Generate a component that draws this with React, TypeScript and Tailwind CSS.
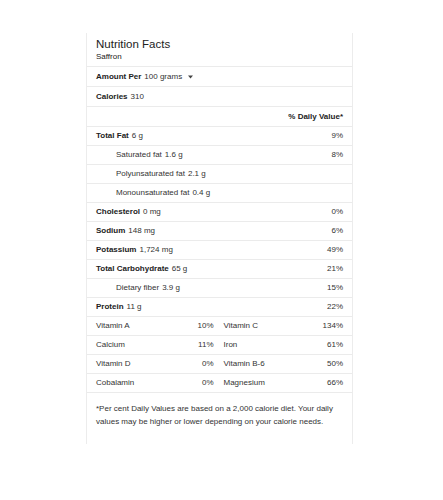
import React from "react";

type Row = {
  label: string;
  value?: string;
  pct?: string;
  bold?: boolean;
  indent?: boolean;
};

const rows: Row[] = [
  { label: "Total Fat", value: "6 g", pct: "9%", bold: true },
  { label: "Saturated fat", value: "1.6 g", pct: "8%", indent: true },
  { label: "Polyunsaturated fat", value: "2.1 g", indent: true },
  { label: "Monounsaturated fat", value: "0.4 g", indent: true },
  { label: "Cholesterol", value: "0 mg", pct: "0%", bold: true },
  { label: "Sodium", value: "148 mg", pct: "6%", bold: true },
  { label: "Potassium", value: "1,724 mg", pct: "49%", bold: true },
  { label: "Total Carbohydrate", value: "65 g", pct: "21%", bold: true },
  { label: "Dietary fiber", value: "3.9 g", pct: "15%", indent: true },
  { label: "Protein", value: "11 g", pct: "22%", bold: true },
];

const vitamins: [string, string, string, string][] = [
  ["Vitamin A", "10%", "Vitamin C", "134%"],
  ["Calcium", "11%", "Iron", "61%"],
  ["Vitamin D", "0%", "Vitamin B-6", "50%"],
  ["Cobalamin", "0%", "Magnesium", "66%"],
];

export default function App() {
  return (
    <div className="min-h-[500px] bg-white pt-[33px] pl-[86px] font-['Liberation_Sans',Arial,sans-serif] text-[#222]">
      <div className="w-[267px] border-x border-[#ececec] bg-white">
        {/* header */}
        <div className="h-[34px] border-b border-[#ebebeb] px-[9px] pt-[4px]">
          <h1 className="text-[11.5px] leading-[14px] text-[#222]">Nutrition Facts</h1>
          <p className="text-[8px] leading-[12px] text-[#222]">Saffron</p>
        </div>

        <div className="flex h-[20px] items-center border-b border-[#ebebeb] px-[9px] text-[8px]">
          <span className="font-bold">Amount Per</span>
          <span className="ml-[3px] text-[#333]">100 grams</span>
          <svg width="5" height="4" viewBox="0 0 5 4" className="ml-[6px]">
            <path d="M0 0.5 L5 0.5 L2.5 3.5 Z" fill="#444" />
          </svg>
        </div>

        <div className="flex h-[20px] items-center border-b border-[#ebebeb] px-[9px] text-[8px]">
          <span className="font-bold">Calories</span>
          <span className="ml-[3px] text-[#333]">310</span>
        </div>

        <div className="flex h-[20px] items-center justify-end border-b border-[#ebebeb] px-[9px] text-[8px] font-bold">
          % Daily Value*
        </div>

        {rows.map((r) => (
          <div
            key={r.label}
            className={`flex h-[19px] items-center justify-between border-b border-[#ebebeb] pr-[9px] text-[8px] ${
              r.indent ? "pl-[29px]" : "pl-[9px]"
            }`}
          >
            <span>
              <span className={r.bold ? "font-bold" : "text-[#333]"}>{r.label}</span>
              <span className="ml-[3px] text-[#333]">{r.value}</span>
            </span>
            <span className="text-[#333]">{r.pct}</span>
          </div>
        ))}

        {vitamins.map(([a, ap, b, bp]) => (
          <div
            key={a}
            className="grid h-[19px] grid-cols-2 items-center border-b border-[#ebebeb] px-[9px] text-[8px] text-[#333]"
          >
            <div className="flex justify-between pr-[6px]">
              <span>{a}</span>
              <span>{ap}</span>
            </div>
            <div className="flex justify-between pl-[4px]">
              <span>{b}</span>
              <span>{bp}</span>
            </div>
          </div>
        ))}

        <p className="px-[9px] pt-[9px] pb-[16px] text-[8px] leading-[13px] text-[#333]">
          *Per cent Daily Values are based on a 2,000 calorie diet. Your daily values may be higher or lower depending on your calorie needs.
        </p>
      </div>
    </div>
  );
}
